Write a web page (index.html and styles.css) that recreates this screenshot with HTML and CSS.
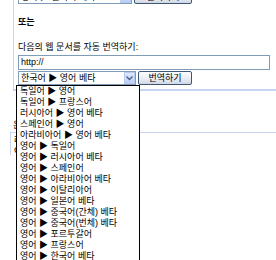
FILE: index.html
```html
<!DOCTYPE html>
<html>
<head>
    <link rel="stylesheet" href="styles.css">
</head>
<body>
    <div class="page">
        <div class="box">
            <div class="row">
                <div class="select select-top">
                    <span class="select-text">영어 ▶ 한국어 베타</span>
                    <span class="arrow"><svg width="7" height="5" viewBox="0 0 7 5"><path d="M0.5 0.5 L3.5 3.5 L6.5 0.5" fill="none" stroke="#4d6185" stroke-width="1.4"/></svg></span>
                </div>
                <div class="btn btn-top">번역하기</div>
            </div>
            <p class="or">또는</p>
            <p class="label">다음의 웹 문서를 자동 번역하기:</p>
            <div class="input">http://</div>
            <div class="row row-url">
                <div class="select select-url">
                    <span class="select-text">한국어 ▶ 영어 베타</span>
                    <span class="arrow"><svg width="7" height="5" viewBox="0 0 7 5"><path d="M0.5 0.5 L3.5 3.5 L6.5 0.5" fill="none" stroke="#4d6185" stroke-width="1.4"/></svg></span>
                </div>
                <div class="btn btn-url">번역하기</div>
            </div>
        </div>

        <!-- content behind the open list -->
        <div class="tools">
            <p class="tools-title">은</p>
            <div class="tools-box">
                <p>러</p>
                <p>G</p>
            </div>
        </div>

        <ul class="dropdown">
            <li>독일어 ▶ 영어</li>
            <li>독일어 ▶ 프랑스어</li>
            <li>러시아어 ▶ 영어 베타</li>
            <li>스페인어 ▶ 영어</li>
            <li>아라비아어 ▶ 영어 베타</li>
            <li>영어 ▶ 독일어</li>
            <li>영어 ▶ 러시아어 베타</li>
            <li>영어 ▶ 스페인어</li>
            <li>영어 ▶ 아라비아어 베타</li>
            <li>영어 ▶ 이탈리아어</li>
            <li>영어 ▶ 일본어 베타</li>
            <li>영어 ▶ 중국어(간체) 베타</li>
            <li>영어 ▶ 중국어(번체) 베타</li>
            <li>영어 ▶ 포르투갈어</li>
            <li>영어 ▶ 프랑스어</li>
            <li>영어 ▶ 한국어 베타</li>
            <li>일본어 ▶ 영어 베타</li>
        </ul>
    </div>
</body>
</html>
```

FILE: styles.css
```css
body {
    margin: 0;
    padding: 0;
    background: #fff;
    font-family: "Liberation Sans", "Noto Sans CJK KR", sans-serif;
    font-size: 9px;
    color: #000;
    overflow: hidden;
}

.page {
    position: relative;
    height: 260px;
    overflow: hidden;
}

.box {
    margin-top: -10px;
    margin-left: 13px;
    border-left: 1px solid #c5d6f2;
    border-bottom: 2px solid #c5d6f2;
    padding: 0 0 4px 4px;
}

p {
    margin: 0;
}

.row {
    display: flex;
    height: 14px;
    gap: 2px;
}

.or {
    margin-top: 12px;
    line-height: 12px;
    font-weight: bold;
}

.label {
    margin-top: 13px;
    line-height: 12px;
}

.input {
    margin-top: 2px;
    width: 248px;
    height: 13px;
    border: 1px solid #7f9db9;
    line-height: 13px;
    padding-left: 2px;
    box-sizing: content-box;
    font-size: 9px;
}

.row-url {
    margin-top: 1px;
}

.select {
    display: flex;
    align-items: center;
    justify-content: space-between;
    height: 14px;
    box-sizing: border-box;
    border: 1px solid #7f9db9;
    padding-left: 2px;
    background: #fff;
}

.select-top {
    width: 114px;
}

.select-url {
    width: 118px;
}

.select-text {
    line-height: 12px;
    white-space: nowrap;
}

.arrow {
    display: flex;
    align-items: center;
    justify-content: center;
    width: 11px;
    height: 12px;
    box-sizing: border-box;
    border: 1px solid #b9cbf3;
    background: linear-gradient(#dfe8fd, #bccdf8);
}

.btn {
    height: 14px;
    box-sizing: border-box;
    border: 1px solid #3d5775;
    border-radius: 2px;
    background: linear-gradient(#fdfdfe, #e3e8f0 70%, #cfd6e2);
    text-align: center;
    line-height: 12px;
}

.btn-top {
    width: 58px;
}

.btn-url {
    width: 54px;
}

.tools {
    margin-top: 28px;
    margin-left: 10px;
}

.tools-title {
    line-height: 12px;
    padding-left: 3px;
}

.tools-box {
    margin-top: 1px;
    border-left: 1px solid #c5d6f2;
    border-top: 1px solid #c5d6f2;
    padding-left: 3px;
    padding-top: 2px;
    line-height: 10px;
}

.dropdown {
    position: absolute;
    left: 16px;
    top: 85px;
    width: 124px;
    box-sizing: border-box;
    margin: 0;
    padding: 0;
    list-style: none;
    border: 1px solid #000;
    background: #fff;
}

.dropdown li {
    height: 11px;
    line-height: 11px;
    padding-left: 3px;
    white-space: nowrap;
}
```
